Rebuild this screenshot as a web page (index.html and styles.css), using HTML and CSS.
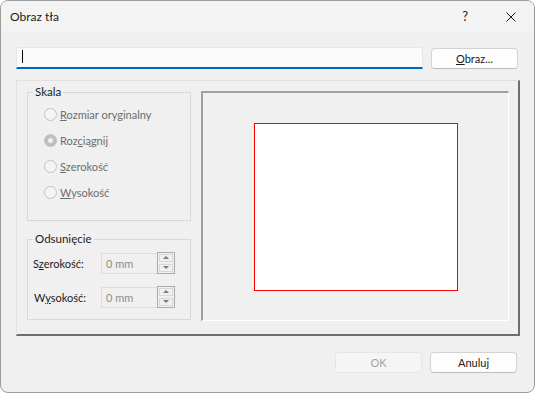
FILE: index.html
```html
<!DOCTYPE html>
<html lang="pl">
<head>
  <meta charset="UTF-8">
  <title>Obraz tła</title>
  <link rel="stylesheet" href="styles.css">
</head>
<body>

  <!-- Dialog window -->
  <div class="window">
    <div class="titlebar">
      <span class="title">Obraz tła</span>
      <span class="help">?</span>
      <span class="close">
        <svg width="10" height="10" viewBox="0 0 10 10"><path d="M0.5 0.5 L9.5 9.5 M9.5 0.5 L0.5 9.5" stroke="#1b1b1b" stroke-width="1" fill="none"/></svg>
      </span>
    </div>

    <div class="content">
      <!-- File path row -->
      <div class="path-row">
        <div class="path-input"><span class="caret"></span></div>
        <button class="btn btn-browse"><u>O</u>braz...</button>
      </div>

      <!-- Main frame -->
      <div class="frame">
        <div class="options">
          <fieldset class="group group-scale">
            <legend>Skala</legend>
            <label class="radio"><span class="dot"></span><span><u>R</u>ozmiar oryginalny</span></label>
            <label class="radio"><span class="dot checked"></span><span>Roz<u>c</u>iągnij</span></label>
            <label class="radio"><span class="dot"></span><span><u>S</u>zerokość</span></label>
            <label class="radio"><span class="dot"></span><span><u>W</u>ysokość</span></label>
          </fieldset>

          <fieldset class="group group-offset">
            <legend>Odsunięcie</legend>
            <div class="spin-row">
              <span class="spin-label">S<u>z</u>erokość:</span>
              <div class="spin">
                <span class="spin-value">0 mm</span>
                <span class="spin-btns"><span class="arrow up"></span><span class="arrow down"></span></span>
              </div>
            </div>
            <div class="spin-row">
              <span class="spin-label second">W<u>y</u>sokość:</span>
              <div class="spin">
                <span class="spin-value">0 mm</span>
                <span class="spin-btns"><span class="arrow up"></span><span class="arrow down"></span></span>
              </div>
            </div>
          </fieldset>
        </div>

        <!-- Page preview -->
        <div class="preview">
          <div class="page"></div>
        </div>
      </div>

      <!-- Dialog buttons -->
      <div class="footer">
        <button class="btn" disabled>OK</button>
        <button class="btn">Anuluj</button>
      </div>
    </div>
  </div>

</body>
</html>
```

FILE: styles.css
```css
/* General Styles */
body {
  margin: 0;
  background-color: #ffffff;
  font-family: Lato, "Liberation Sans", sans-serif;
  font-size: 11px;
  color: #1b1b1b;
}

.window {
  width: 535px;
  height: 393px;
  box-sizing: border-box;
  border: 1px solid #9c9c9c;
  border-radius: 8px;
  background-color: #f0f0f0;
  overflow: hidden;
}

/* Title bar */
.titlebar {
  height: 30px;
  display: flex;
  align-items: center;
  padding-left: 9px;
  background-color: #f3f3f3;
  font-size: 12px;
}

.title {
  flex: 1;
}

.help {
  font-size: 13px;
  margin-right: 38px;
}

.close {
  display: flex;
  margin-right: 18px;
  margin-top: 1px;
}

.content {
  padding: 16px 14px 0 15px;
}

/* Path row */
.path-row {
  display: flex;
  align-items: flex-start;
  gap: 8px;
}

.path-input {
  width: 407px;
  height: 22px;
  box-sizing: border-box;
  border: 1px solid #e6e6e6;
  border-bottom: 2px solid #0067c0;
  border-radius: 3px 3px 0 0;
  background-color: #fbfbfb;
  padding: 2px 0 0 5px;
}

.caret {
  display: block;
  width: 1px;
  height: 13px;
  background-color: #000000;
}

.btn {
  font-family: inherit;
  font-size: 11px;
  color: #1b1b1b;
  width: 87px;
  height: 21px;
  padding: 0;
  background-color: #fdfdfd;
  border: 1px solid #d3d3d3;
  border-bottom-color: #bdbdbd;
  border-radius: 4px;
}

.btn:disabled {
  color: #a3a3a3;
  background-color: #f5f5f5;
  border-color: #e5e5e5;
}

.btn-browse {
  margin-top: 1px;
}

/* Raised frame */
.frame {
  margin-top: 11px;
  height: 256px;
  box-sizing: border-box;
  display: flex;
  gap: 10px;
  padding: 0 0 0 10px;
  border-style: solid;
  border-width: 1px 2px 2px 1px;
  border-color: #e2e2e2 #6e6e6e #6e6e6e #e2e2e2;
}

.options {
  width: 164px;
  display: flex;
  flex-direction: column;
  gap: 10px;
  padding-top: 3px;
}

.group {
  margin: 0;
  padding: 0;
  border: 1px solid #d9d9d9;
}

.group legend {
  margin-left: 5px;
  padding: 0 2px;
  line-height: 16px;
  font-size: 11.5px;
}

.group-scale {
  height: 137px;
  box-sizing: border-box;
  padding-top: 1px;
}

.group-offset {
  height: 89px;
  box-sizing: border-box;
  padding-top: 5px;
}

/* Radio buttons (disabled) */
.radio {
  display: flex;
  align-items: center;
  height: 26px;
  padding-left: 16px;
  gap: 3px;
  color: #6d6d6d;
}

.dot {
  width: 13px;
  height: 13px;
  box-sizing: border-box;
  border: 1px solid #c3c3c3;
  border-radius: 50%;
  background-color: #f4f4f4;
  display: flex;
  align-items: center;
  justify-content: center;
}

.dot.checked {
  background-color: #bfbfbf;
  border-color: #bfbfbf;
}

.dot.checked:before {
  content: "";
  width: 5px;
  height: 5px;
  border-radius: 50%;
  background-color: #f0f0f0;
}

/* Spin boxes */
.spin-row {
  display: flex;
  align-items: center;
  height: 22px;
  margin-bottom: 12px;
}

.spin-label {
  width: 68px;
  padding-left: 5px;
}

.spin-label.second {
  width: 67px;
  padding-left: 6px;
}

.spin {
  display: flex;
  height: 22px;
}

.spin-value {
  width: 56px;
  box-sizing: border-box;
  height: 21px;
  margin-top: 1px;
  border: 1px solid #dcdcdc;
  border-right: none;
  color: #8c8c8c;
  padding: 3px 0 0 4px;
}

.spin-btns {
  width: 18px;
  box-sizing: border-box;
  border: 1px solid #ababab;
  display: flex;
  flex-direction: column;
}

.arrow {
  flex: 1;
  margin: 1px;
  border: 1px solid #d8d8d8;
  position: relative;
}

.arrow:before {
  content: "";
  position: absolute;
  left: 50%;
  top: 50%;
  margin: -2px 0 0 -3px;
  border-left: 3px solid transparent;
  border-right: 3px solid transparent;
}

.arrow.up:before {
  border-bottom: 3px solid #7a7a7a;
}

.arrow.down:before {
  border-top: 3px solid #7a7a7a;
}

/* Preview */
.preview {
  margin-top: 10px;
  width: 308px;
  height: 230px;
  box-sizing: border-box;
  border-style: solid;
  border-width: 2px 1px 1px 2px;
  border-color: #a0a0a0 #ffffff #ffffff #a0a0a0;
  display: flex;
  align-items: center;
  justify-content: center;
}

.page {
  width: 204px;
  height: 168px;
  box-sizing: border-box;
  border: 1px solid #ff0000;
  background-color: #ffffff;
}

/* Footer */
.footer {
  display: flex;
  justify-content: flex-end;
  gap: 8px;
  margin-top: 16px;
  padding-right: 3px;
}
```
